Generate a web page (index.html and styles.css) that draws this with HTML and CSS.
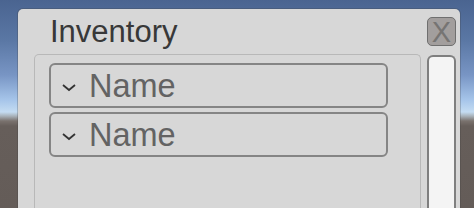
FILE: index.html
```html
<!DOCTYPE html>
<html lang="en">
  <head>
    <meta charset="UTF-8" />
    <meta name="viewport" content="width=device-width, initial-scale=1.0" />
    <title>Inventory</title>
    <link rel="stylesheet" href="styles.css">
  </head>
  <body>
    <div class="panel">
      <div class="header">
        <h1 class="title">Inventory</h1>
        <button class="close" type="button">X</button>
      </div>
      <div class="content">
        <div class="scroll">
          <div class="item">
            <svg class="chevron" width="16" height="9" viewBox="0 0 16 9">
              <polyline points="2,2 8,7 14,2" fill="none" stroke="#333" stroke-width="1.8" />
            </svg>
            <span class="name">Name</span>
          </div>
          <div class="item">
            <svg class="chevron" width="16" height="9" viewBox="0 0 16 9">
              <polyline points="2,2 8,7 14,2" fill="none" stroke="#333" stroke-width="1.8" />
            </svg>
            <span class="name">Name</span>
          </div>
        </div>
        <div class="scrollbar"></div>
      </div>
    </div>
  </body>
</html>
```

FILE: styles.css
```css
html {
  font-family: "Liberation Sans", Arial, sans-serif;
}

body {
  margin: 0;
  height: 208px;
  overflow: hidden;
  background: linear-gradient(
    to bottom,
    #4a6490 0px,
    #5a77a4 40px,
    #7895c4 75px,
    #a6c5ea 100px,
    #c4dcf2 112px,
    #a9b3bb 116px,
    #7a726e 121px,
    #665e5a 126px,
    #645c58 208px
  );
}

.panel {
  margin: 9px 0 0 18px;
  width: 442px;
  height: 199px;
  box-sizing: border-box;
  padding: 8px 4px 0 16px;
  background-color: #d7d7d7;
  border-radius: 5px 5px 0 0;
  box-shadow: 0 0 0 1px rgba(60, 60, 60, 0.25);
  display: flex;
  flex-direction: column;
}

.header {
  display: flex;
  justify-content: space-between;
  height: 37px;
}

.title {
  margin: 0 0 0 16px;
  font-size: 31px;
  font-weight: normal;
  line-height: 30px;
  color: #383838;
}

.close {
  width: 29px;
  height: 29px;
  box-sizing: border-box;
  padding: 0;
  margin: 0;
  background-color: #a29e9d;
  border: 1.5px solid #6f6f6f;
  border-radius: 5px;
  font-family: "Liberation Sans", Arial, sans-serif;
  font-size: 29px;
  line-height: 26px;
  color: #767473;
}

.content {
  display: flex;
  gap: 6px;
  flex: 1;
}

.scroll {
  width: 387px;
  box-sizing: border-box;
  padding: 8px 32px 0 14px;
  border: 1px solid #b8b8b8;
  border-bottom: none;
  border-radius: 5px 5px 0 0;
}

.item {
  height: 45px;
  box-sizing: border-box;
  margin-bottom: 4px;
  padding-left: 10px;
  border: 2px solid #858585;
  border-radius: 6px;
  display: flex;
  align-items: center;
}

.chevron {
  margin-top: 3px;
  margin-right: 12px;
}

.name {
  font-size: 32.5px;
  line-height: 32px;
  color: #636363;
}

.scrollbar {
  width: 29px;
  margin-top: 1px;
  box-sizing: border-box;
  background-color: #f4f4f4;
  border: 2px solid #7f7f7f;
  border-bottom: none;
  border-radius: 6px 6px 0 0;
}
```
